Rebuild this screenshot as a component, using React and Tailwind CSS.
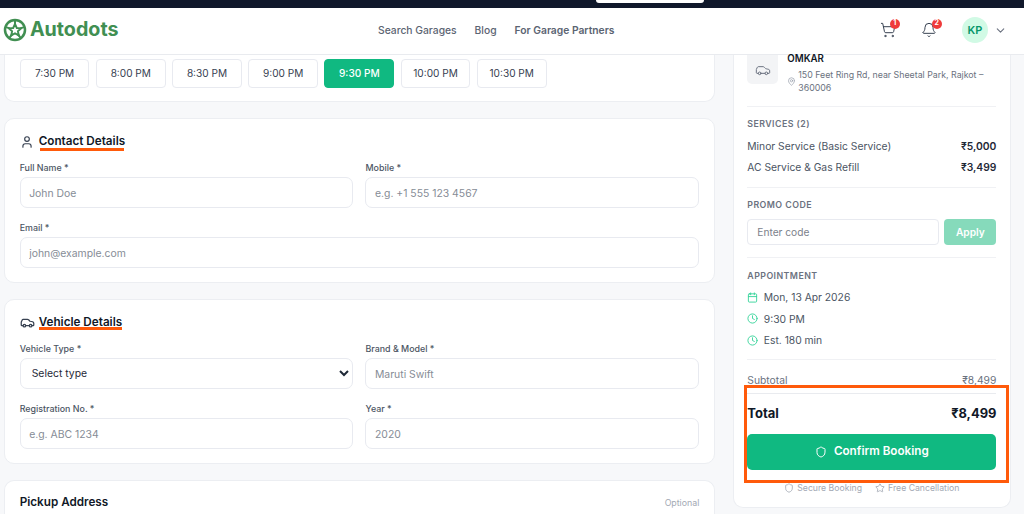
import React from "react";
import { ShoppingCart, Bell, ChevronDown, User, Car, MapPin, Calendar, Clock, Shield, Star } from "lucide-react";

const times = ["7:30 PM", "8:00 PM", "8:30 PM", "9:00 PM", "9:30 PM", "10:00 PM", "10:30 PM"];

function Logo() {
  return (
    <svg width="24" height="24" viewBox="0 0 24 24" fill="none" stroke="#418f52" strokeLinejoin="round">
      <circle cx="12" cy="12" r="10" strokeWidth="2.5" />
      <path d="M12 6l1.8 4 4.4.4-3.3 2.9 1 4.3-3.9-2.3-3.9 2.3 1-4.3-3.3-2.9 4.4-.4z" strokeWidth="1.9" />
      <path d="M12 2.5v3.5M3 9.1l3.8 1.3M21 9.1l-3.8 1.3M6.4 19.8l2.4-3.2M17.6 19.8l-2.4-3.2" strokeWidth="2" />
    </svg>
  );
}

function Field({ label, placeholder, className = "" }) {
  return (
    <label className={"flex flex-col " + className}>
      <span className="mb-[3.5px] text-[8.9px] leading-[12px] font-medium text-[#4b5563]">{label}</span>
      <input
        placeholder={placeholder}
        className="h-[31px] w-full rounded-[7px] border border-[#e8eaf0] bg-white px-[8.5px] pt-[1px] text-[10.4px] outline-none placeholder:text-[#868c96]"
      />
    </label>
  );
}

function Section({ icon, title, underline, children }) {
  return (
    <section className="rounded-[10px] border border-[#eceef2] bg-white px-[14.4px] pt-[14px] pb-[14px]">
      <div className="mb-[11.5px] flex h-[17px] items-center gap-[5px]">
        {icon}
        <h2 className="relative text-[11.7px] leading-[17px] font-semibold text-[#111827]">
          {title}
          <span className={"absolute h-[3px] bg-[#ff5a0a] " + underline} />
        </h2>
      </div>
      {children}
    </section>
  );
}

function Badge({ n, className }) {
  return (
    <span className={"absolute flex h-[10.4px] w-[10.4px] items-center justify-center rounded-full bg-[#ef3b3b] text-[7px] font-bold text-white " + className}>
      {n}
    </span>
  );
}

function Caption({ children }) {
  return <div className="text-[8.8px] leading-[12px] font-semibold tracking-[0.45px] text-[#6b7280]">{children}</div>;
}

export default function App() {
  return (
    <div className="flex h-[514px] w-[1024px] flex-col overflow-hidden bg-[#f7f8fa] font-['Inter',sans-serif] text-[#111827]">
      <div className="relative h-[8px] shrink-0 bg-[#10182b]">
        <div className="absolute top-0 left-[596px] h-[3px] w-[108px] rounded-b-[4px] bg-white" />
      </div>

      <header className="flex h-[47px] shrink-0 items-center border-b border-[#e9ebef] bg-white pr-[17.25px] pl-[3.2px]">
        <div className="flex w-[374.8px] items-center gap-[2.7px] pb-[2px]">
          <Logo />
          <span className="text-[19.7px] font-bold text-[#418f52]">Autodots</span>
        </div>
        <nav className="flex items-center gap-[18px] pb-[1px] text-[10.3px] font-medium text-[#5b6472]">
          <span>Search Garages</span>
          <span>Blog</span>
          <span className="font-semibold">For Garage Partners</span>
        </nav>
        <div className="ml-auto flex items-center pb-[2px]">
          <span className="relative mr-[24.6px]">
            <ShoppingCart size={16} strokeWidth={1.5} className="text-[#374151]" />
            <Badge n="1" className="-top-[3.5px] -right-[3.6px]" />
          </span>
          <span className="relative mr-[25px]">
            <Bell size={16} strokeWidth={1.5} className="text-[#374151]" />
            <Badge n="2" className="-top-[3.5px] -right-[5px]" />
          </span>
          <span className="flex h-[26px] w-[26px] items-center justify-center rounded-full bg-[#d1fae5] text-[11px] font-semibold text-[#059669]">
            KP
          </span>
          <ChevronDown size={13} className="ml-[5.75px] text-[#6b7280]" />
        </div>
      </header>

      <main className="flex min-h-0 flex-1 gap-[18px] pr-[13px] pl-[4.3px]">
        <div className="flex w-[710.4px] shrink-0 flex-col gap-[16px]">
          <section className="h-[47.3px] shrink-0 rounded-b-[10px] border border-t-0 border-[#eceef2] bg-white pt-[4.3px] pl-[14.4px]">
            <div className="flex gap-[6.4px]">
              {times.map((t) => (
                <button
                  key={t}
                  className={
                    "h-[28.4px] w-[69.8px] rounded-[4px] border text-[10.1px] " +
                    (t === "9:30 PM"
                      ? "border-[#10b981] bg-[#10b981] font-medium text-white"
                      : "border-[#e8eaf0] bg-white text-[#374151]")
                  }
                >
                  {t}
                </button>
              ))}
            </div>
          </section>

          <Section icon={<User size={14} strokeWidth={2} className="text-[#374151]" />} title="Contact Details" underline="-bottom-[0.4px] left-[1px] w-[84px]">
            <div className="grid grid-cols-2 gap-x-[12px] gap-y-[13.5px]">
              <Field label="Full Name *" placeholder="John Doe" />
              <Field label="Mobile *" placeholder="e.g. +1 555 123 4567" />
              <Field label="Email *" placeholder="john@example.com" className="col-span-2" />
            </div>
          </Section>

          <Section icon={<Car size={15} strokeWidth={2} className="-mr-[1px] text-[#374151]" />} title="Vehicle Details" underline="bottom-[1px] left-0 w-[83px]">
            <div className="grid grid-cols-2 gap-x-[12px] gap-y-[13.5px]">
              <label className="flex flex-col">
                <span className="mb-[3.5px] text-[8.9px] leading-[12px] font-medium text-[#4b5563]">Vehicle Type *</span>
                <select className="h-[31px] w-full rounded-[7px] border border-[#e8eaf0] bg-white pl-[7px] text-[10.4px] text-[#1f2937] outline-none">
                  <option>Select type</option>
                </select>
              </label>
              <Field label="Brand & Model *" placeholder="Maruti Swift" />
              <Field label="Registration No. *" placeholder="e.g. ABC 1234" />
              <Field label="Year *" placeholder="2020" />
            </div>
          </Section>

          <section className="flex-1 rounded-t-[10px] border border-b-0 border-[#eceef2] bg-white px-[14.4px] pt-[13px]">
            <div className="flex items-center justify-between">
              <h2 className="text-[11.7px] leading-[17px] font-semibold text-[#111827]">Pickup Address</h2>
              <span className="text-[8.8px] text-[#a3a9b4]">Optional</span>
            </div>
          </section>
        </div>

        <aside className="flex h-[453.3px] w-[278.3px] shrink-0 flex-col rounded-b-[10px] border border-t-0 border-[#eceef2] bg-white px-[13.6px]">
          <div className="flex h-[52px] gap-[9px] border-b border-[#f0f1f4] pb-[12px]">
            <div className="flex h-[29px] w-[31px] shrink-0 items-center justify-center rounded-b-[5px] bg-[#f3f4f6]">
              <Car size={16} strokeWidth={1.5} className="text-[#6b7280]" />
            </div>
            <div className="min-w-0">
              <div className="text-[9.7px] leading-[8px] font-semibold text-[#111827]">OMKAR</div>
              <div className="mt-[5px] flex items-center gap-[2px]">
                <MapPin size={9} className="shrink-0 text-[#9ca3af]" />
                <div className="text-[8.8px] leading-[13px] text-[#6b7280]">150 Feet Ring Rd, near Sheetal Park, Rajkot – 360006</div>
              </div>
            </div>
          </div>

          <div className="h-[81px] border-b border-[#f0f1f4] pt-[11px]">
            <Caption>SERVICES (2)</Caption>
            <div className="mt-[9px] flex items-center justify-between text-[10.3px] leading-[14px] text-[#4b5563]">
              <span>Minor Service (Basic Service)</span>
              <span className="font-semibold text-[#1f2937]">₹5,000</span>
            </div>
            <div className="mt-[7px] flex items-center justify-between text-[10.3px] leading-[14px] text-[#4b5563]">
              <span>AC Service &amp; Gas Refill</span>
              <span className="font-semibold text-[#1f2937]">₹3,499</span>
            </div>
          </div>

          <div className="h-[70px] border-b border-[#f0f1f4] pt-[11px]">
            <Caption>PROMO CODE</Caption>
            <div className="mt-[8px] flex gap-[5.5px]">
              <input placeholder="Enter code" className="h-[26.4px] min-w-0 flex-1 rounded-[4px] border border-[#e8eaf0] px-[9px] text-[10.2px] outline-none placeholder:text-[#7b818b]" />
              <button className="h-[26.4px] w-[52px] rounded-[4px] bg-[#86dabb] text-[10.2px] font-semibold text-white">Apply</button>
            </div>
          </div>

          <div className="h-[102px] border-b border-[#f0f1f4] pt-[11.5px]">
            <Caption>APPOINTMENT</Caption>
            <div className="mt-[8.5px] flex flex-col gap-[7.5px] text-[10.3px] leading-[14px] text-[#4b5563]">
              <div className="flex items-center gap-[5.5px]"><Calendar size={11} className="text-[#34d399]" />Mon, 13 Apr 2026</div>
              <div className="flex items-center gap-[5.5px]"><Clock size={11} className="text-[#34d399]" />9:30 PM</div>
              <div className="flex items-center gap-[5.5px]"><Clock size={11} className="text-[#34d399]" />Est. 180 min</div>
            </div>
          </div>

          <div className="mt-[13px] flex justify-between text-[10.3px] leading-[14px] text-[#6b7280]">
            <span>Subtotal</span>
            <span>₹8,499</span>
          </div>

          <div className="relative mt-[6px]">
            <div className="pointer-events-none absolute -top-[7.7px] -right-[13px] -left-[3px] h-[98px] border-[3px] border-[#ff5a0a]" />
            <div className="flex items-center justify-between border-t border-[#e9ebef] pt-[10.8px]">
              <span className="text-[13px] leading-[17px] font-bold">Total</span>
              <span className="text-[12.9px] leading-[17px] font-bold">₹8,499</span>
            </div>
            <button className="mt-[12.2px] flex h-[36px] w-full items-center justify-center gap-[7px] rounded-[5px] bg-[#10b981] text-[11.7px] font-semibold text-white">
              <Shield size={12} />
              Confirm Booking
            </button>
          </div>

          <div className="mt-[12px] flex items-center justify-center gap-[13px] text-[8.7px] leading-[12px] text-[#a3a9b4]">
            <span className="flex items-center gap-[3px]"><Shield size={10} />Secure Booking</span>
            <span className="flex items-center gap-[3px]"><Star size={10} />Free Cancellation</span>
          </div>
        </aside>
      </main>
    </div>
  );
}
